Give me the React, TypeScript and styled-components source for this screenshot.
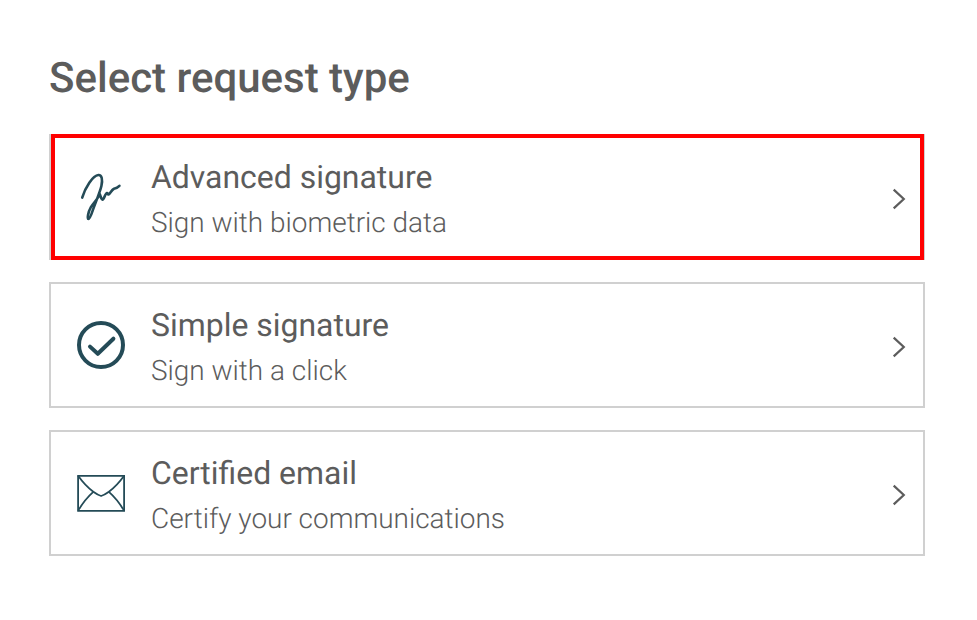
import React from "react";
import styled, { createGlobalStyle } from "styled-components";

const Global = createGlobalStyle`
  body { margin: 0; background: #fff; font-family: Roboto, sans-serif; color: #5c5c5c; text-rendering: geometricPrecision; }
  * { box-sizing: border-box; }
`;
const Page = styled.main`padding: 54px 52px 0 49px; height: 620px; overflow: hidden;`;
const Title = styled.h1`margin: 0 0 30px; font-size: 42px; line-height: 50px; font-weight: 500;`;
const List = styled.div`display: flex; flex-direction: column; gap: 22px;`;
const Card = styled.div<{ $active?: boolean }>`
  display: flex; align-items: center; height: 126px; padding: 0 16px 0 24px;
  border: 2px solid #d0d0d0; position: relative;
  ${(p) => p.$active && `&::after { content: ""; position: absolute; inset: -2px -1px -2px 0; border: 4px solid #ff0000; }`}
`;
const IconBox = styled.div`width: 52px; height: 52px; margin-right: 24px; color: #244b57; svg { display: block; }`;
const Copy = styled.div`flex: 1; padding-top: 4px;`;
const Name = styled.div`font-size: 31.95px; line-height: 40px;`;
const Detail = styled.div`font-size: 27.95px; line-height: 36px; font-weight: 300; margin-top: 8px;`;
const Arrow = styled.svg`display: block; margin-top: 4px;`;

const Signature = () => (
  <svg width="52" height="52" viewBox="0 0 52 52" fill="none" stroke="currentColor" strokeWidth="2.6" strokeLinecap="round" strokeLinejoin="round">
    <path d="M7.2 26.6C10.2 16.5 17.8 4.4 23.4 4C26.9 3.8 27.8 8.6 26.4 15C25.2 20.6 20 32.8 17.4 40.4C16 44.6 14.6 48 13.4 48C12.2 47.8 12.8 41.6 15.9 36.2C18.8 31.4 23 28.2 24.6 22.8C25.7 25 26 28.4 27.6 28.6C29 28.6 30.2 22.2 32 22C32.8 22 32.5 23.6 33.6 23.4C35.3 22.8 36.5 18.8 39 17.7C41 17.3 42.8 16.5 44.4 14.8" />
  </svg>
);
const Check = () => (
  <svg width="52" height="52" viewBox="0 0 52 52" fill="none" stroke="currentColor" strokeWidth="4" strokeLinecap="round" strokeLinejoin="round">
    <circle cx="26" cy="26" r="22" />
    <path d="M15 27.6L22.8 34.8L38.4 19.7" />
  </svg>
);
const Mail = () => (
  <svg width="52" height="52" viewBox="0 0 52 52" fill="none" stroke="currentColor" strokeWidth="1.8">
    <path d="M3.1 8.8H49.1V43.8H3.1Z" />
    <path d="M3.1 8.8C7.5 15 13 20.8 18.3 24.8Q23 28.2 26.1 29Q29.2 28.2 33.9 24.8C39.2 20.8 44.7 15 49.1 8.8" />
    <path d="M18.3 24.8C13 29.5 7.5 36 3.1 43.8M33.9 24.8C39.2 29.5 44.7 36 49.1 43.8" />
  </svg>
);
const Chevron = () => (
  <Arrow width="16" height="24" viewBox="0 0 16 24" fill="none" stroke="#5c5c5c" strokeWidth="2.2">
    <path d="M2.7 2.6L12.8 12L2.7 21.4" />
  </Arrow>
);
const items = [
  { name: "Advanced signature", detail: "Sign with biometric data", Icon: Signature },
  { name: "Simple signature", detail: "Sign with a click", Icon: Check },
  { name: "Certified email", detail: "Certify your communications", Icon: Mail },
];
export default function App() {
  return (
    <Page>
      <Global />
      <Title>Select request type</Title>
      <List>
        {items.map(({ name, detail, Icon }, i) => (
          <Card key={name} $active={i === 0}>
            <IconBox><Icon /></IconBox>
            <Copy><Name>{name}</Name><Detail>{detail}</Detail></Copy>
            <Chevron />
          </Card>
        ))}
      </List>
    </Page>
  );
}
